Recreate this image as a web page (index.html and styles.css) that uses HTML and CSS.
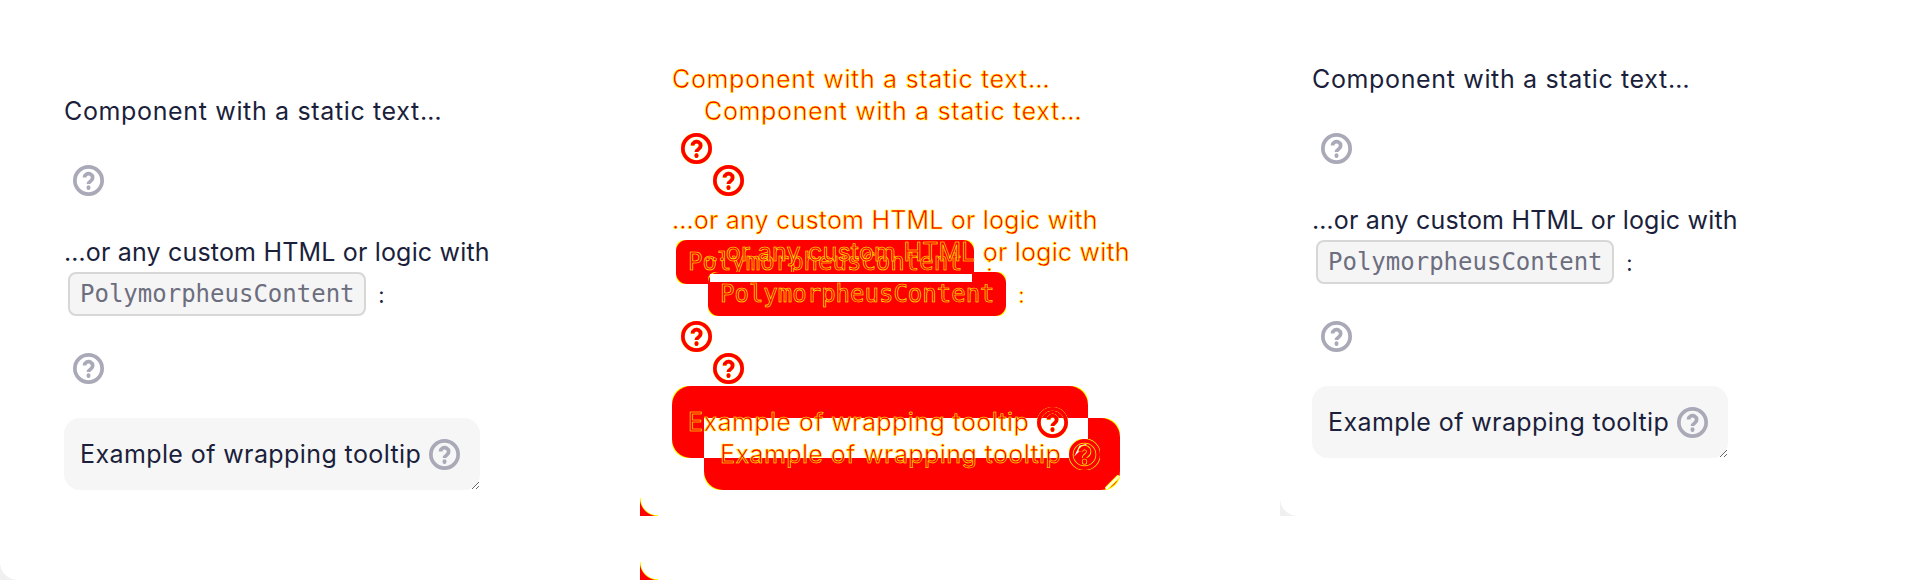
FILE: index.html
```html
<!DOCTYPE html>
<html lang="en">
<head>
    <meta charset="UTF-8" />
    <meta name="viewport" content="width=device-width, initial-scale=1.0" />
    <title>Tooltip screenshot diff</title>
    <link rel="stylesheet" href="styles.css">
</head>
<body>

    <div class="compare">

        <!-- baseline -->
        <div class="shot shot-full">
            <div class="content content-wide">
                <p class="line line-static">Component with a static text…</p>
                <div class="hint hint-first">
                    <svg class="icon" viewBox="0 0 30 30"><circle cx="15" cy="15" r="13.2"/><path d="M11.2 12.2a3.9 3.9 0 1 1 6 3.3c-1.4.9-2.2 1.6-2.2 3"/><path class="dot" d="M15 21.6v.6"/></svg>
                </div>
                <p class="line line-custom">…or any custom HTML or logic with <span class="chip"><code class="chip-text">PolymorpheusContent</code></span> <span class="colon">:</span></p>
                <div class="hint hint-second">
                    <svg class="icon" viewBox="0 0 30 30"><circle cx="15" cy="15" r="13.2"/><path d="M11.2 12.2a3.9 3.9 0 1 1 6 3.3c-1.4.9-2.2 1.6-2.2 3"/><path class="dot" d="M15 21.6v.6"/></svg>
                </div>
                <div class="wrap-box">
                    <span class="wrap-text">Example of wrapping tooltip</span>
                    <svg class="icon" viewBox="0 0 30 30"><circle cx="15" cy="15" r="13.2"/><path d="M11.2 12.2a3.9 3.9 0 1 1 6 3.3c-1.4.9-2.2 1.6-2.2 3"/><path class="dot" d="M15 21.6v.6"/></svg>
                </div>
            </div>
        </div>

        <!-- diff: both versions stacked in one grid cell -->
        <div class="diff">
            <div class="layer layer-short">
                <div class="content content-narrow">
                    <p class="line line-static">Component with a static text…</p>
                    <div class="hint hint-first">
                        <svg class="icon" viewBox="0 0 30 30"><circle cx="15" cy="15" r="13.2"/><path d="M11.2 12.2a3.9 3.9 0 1 1 6 3.3c-1.4.9-2.2 1.6-2.2 3"/><path class="dot" d="M15 21.6v.6"/></svg>
                    </div>
                    <p class="line line-custom">…or any custom HTML or logic with <span class="chip"><code class="chip-text">PolymorpheusContent</code></span> <span class="colon">:</span></p>
                    <div class="hint hint-second">
                        <svg class="icon" viewBox="0 0 30 30"><circle cx="15" cy="15" r="13.2"/><path d="M11.2 12.2a3.9 3.9 0 1 1 6 3.3c-1.4.9-2.2 1.6-2.2 3"/><path class="dot" d="M15 21.6v.6"/></svg>
                    </div>
                    <div class="wrap-box">
                        <span class="wrap-text">Example of wrapping tooltip</span>
                        <svg class="icon" viewBox="0 0 30 30"><circle cx="15" cy="15" r="13.2"/><path d="M11.2 12.2a3.9 3.9 0 1 1 6 3.3c-1.4.9-2.2 1.6-2.2 3"/><path class="dot" d="M15 21.6v.6"/></svg>
                    </div>
                </div>
            </div>
            <div class="layer layer-full">
                <div class="content content-wide">
                    <p class="line line-static">Component with a static text…</p>
                    <div class="hint hint-first">
                        <svg class="icon" viewBox="0 0 30 30"><circle cx="15" cy="15" r="13.2"/><path d="M11.2 12.2a3.9 3.9 0 1 1 6 3.3c-1.4.9-2.2 1.6-2.2 3"/><path class="dot" d="M15 21.6v.6"/></svg>
                    </div>
                    <p class="line line-custom">…or any custom HTML or logic with <span class="chip"><code class="chip-text">PolymorpheusContent</code></span> <span class="colon">:</span></p>
                    <div class="hint hint-second">
                        <svg class="icon" viewBox="0 0 30 30"><circle cx="15" cy="15" r="13.2"/><path d="M11.2 12.2a3.9 3.9 0 1 1 6 3.3c-1.4.9-2.2 1.6-2.2 3"/><path class="dot" d="M15 21.6v.6"/></svg>
                    </div>
                    <div class="wrap-box">
                        <span class="wrap-text">Example of wrapping tooltip</span>
                        <svg class="icon icon-filled" viewBox="0 0 30 30">
                            <circle class="edge" cx="15" cy="15" r="13.2"/>
                            <circle cx="15" cy="15" r="13.2"/>
                            <path class="wedge" d="M5 17L17.5 4.5 10 6.5z"/>
                            <path class="edge" d="M11.2 12.2a3.9 3.9 0 1 1 6 3.3c-1.4.9-2.2 1.6-2.2 3"/>
                            <path d="M11.2 12.2a3.9 3.9 0 1 1 6 3.3c-1.4.9-2.2 1.6-2.2 3"/>
                            <path class="edge dot" d="M15 21.6v.6"/>
                            <path class="dot" d="M15 21.6v.6"/>
                        </svg>
                        <svg class="grip" viewBox="0 0 15 15"><path class="grip-edge" d="M1 14L14 1"/><path d="M1 14L14 1"/></svg>
                    </div>
                </div>
            </div>
        </div>

        <!-- current -->
        <div class="shot shot-short">
            <div class="content content-narrow">
                <p class="line line-static">Component with a static text…</p>
                <div class="hint hint-first">
                    <svg class="icon" viewBox="0 0 30 30"><circle cx="15" cy="15" r="13.2"/><path d="M11.2 12.2a3.9 3.9 0 1 1 6 3.3c-1.4.9-2.2 1.6-2.2 3"/><path class="dot" d="M15 21.6v.6"/></svg>
                </div>
                <p class="line line-custom">…or any custom HTML or logic with <span class="chip"><code class="chip-text">PolymorpheusContent</code></span> <span class="colon">:</span></p>
                <div class="hint hint-second">
                    <svg class="icon" viewBox="0 0 30 30"><circle cx="15" cy="15" r="13.2"/><path d="M11.2 12.2a3.9 3.9 0 1 1 6 3.3c-1.4.9-2.2 1.6-2.2 3"/><path class="dot" d="M15 21.6v.6"/></svg>
                </div>
                <div class="wrap-box">
                    <span class="wrap-text">Example of wrapping tooltip</span>
                    <svg class="icon" viewBox="0 0 30 30"><circle cx="15" cy="15" r="13.2"/><path d="M11.2 12.2a3.9 3.9 0 1 1 6 3.3c-1.4.9-2.2 1.6-2.2 3"/><path class="dot" d="M15 21.6v.6"/></svg>
                </div>
            </div>
        </div>

    </div>

</body>
</html>
```

FILE: styles.css
```css
html, body {
    margin: 0;
    height: 100%;
    background: #fff;
}
body {
    overflow: hidden;
    font-family: Inter, "Noto Sans", sans-serif;
    font-size: 25px;
    color: #1b1f3b;
}
.compare {
    display: flex;
    width: 1920px;
    height: 580px;
}
.shot, .layer {
    position: relative;
    width: 640px;
}
.shot-full, .layer-full {
    height: 580px;
}
.shot-short, .layer-short {
    height: 516px;
}
.shot::after {
    content: "";
    position: absolute;
    left: 0;
    bottom: 0;
    width: 18px;
    height: 18px;
    background: radial-gradient(circle at 18px 0, transparent 17.5px, #f0f0f0 18.5px);
}

.content {
    width: 576px;
}
.content-wide {
    padding: 89px 0 0 64px;
}
.content-narrow {
    padding: 57px 0 0 32px;
}
.line {
    margin: 0;
    line-height: 44px;
}
.line-static {
    letter-spacing: .65px;
}
.line-custom {
    letter-spacing: .18px;
}
.wrap-text {
    letter-spacing: .4px;
}
.hint {
    height: 31px;
    padding-left: 9px;
}
.hint-first {
    margin: 32px 0 34px;
}
.hint-second {
    margin: 35px 0 34px;
}
.icon {
    display: block;
    flex: none;
    width: 31px;
    height: 31px;
    fill: none;
    stroke: #a9a9b8;
    stroke-width: 3.6;
}
.icon .dot {
    stroke-linecap: round;
    stroke-width: 3.8;
}

.chip {
    display: inline-block;
    box-sizing: border-box;
    width: 298px;
    height: 44px;
    margin: -2px 4px 0;
    padding: 0 10px;
    border: 2px solid #d7d7d7;
    border-radius: 8px;
    background: #f5f5f6;
    vertical-align: top;
    line-height: 38px;
    letter-spacing: 0;
}
.chip-text {
    font-family: "DejaVu Sans Mono", monospace;
    font-size: 24px;
    color: #6c6e7e;
}
.colon {
    margin-left: 1px;
    font-size: 22px;
    line-height: 1;
    vertical-align: 2px;
}

.wrap-box {
    display: flex;
    align-items: center;
    gap: 8px;
    box-sizing: border-box;
    width: 416px;
    height: 72px;
    padding: 0 16px;
    border-radius: 16px;
    background: #f6f6f6;
    overflow: hidden;
    resize: both;
}

/* diff panel: red where the versions differ, yellow on antialiased edges */
.diff {
    display: grid;
    width: 640px;
    height: 580px;
}
.layer {
    grid-area: 1 / 1;
}
.layer::after {
    content: "";
    position: absolute;
    left: 0;
    bottom: 0;
    width: 18px;
    height: 18px;
    background: radial-gradient(circle at 18px 0, transparent 17px, #ff0 17.6px, #f00 18.6px);
}
.diff .line,
.diff .wrap-text,
.diff .chip-text,
.diff .colon {
    position: relative;
    z-index: 1;
    color: #f00;
    -webkit-text-stroke: .6px #ff0;
}
.diff .icon {
    position: relative;
    z-index: 1;
    stroke: #f00;
    filter: drop-shadow(0 0 .6px #ff0) drop-shadow(0 0 .6px #ff0);
}
.diff .icon-filled {
    filter: none;
}
.diff .icon-filled .edge {
    fill: #f00;
    stroke: #ff0;
    stroke-width: 5;
}
.diff .icon-filled path.edge {
    fill: none;
}
.diff .icon-filled .wedge {
    fill: #fff;
    stroke: none;
}
.diff .chip,
.diff .wrap-box {
    position: relative;
    border-color: transparent;
    background: #ff0;
    overflow: visible;
    resize: none;
}
.diff .chip::before,
.diff .wrap-box::before {
    content: "";
    position: absolute;
    inset: -2px;
    border-radius: 11px;
    background: #f00;
}
.diff .wrap-box::before {
    inset: 0;
    border-radius: 19px;
}

/* where the two boxes overlap they are equal, so nothing is marked */
.layer-full .chip::after,
.layer-full .wrap-box::after {
    content: "";
    position: absolute;
    left: 0;
    top: 0;
    width: 262px;
    height: 8px;
    background: #fff;
}
.layer-full .wrap-box::after {
    width: 384px;
    height: 40px;
}
.grip {
    position: absolute;
    z-index: 1;
    right: 0;
    bottom: 0;
    width: 15px;
    height: 15px;
    fill: none;
    stroke: #fff;
    stroke-width: 2;
}
.grip .grip-edge {
    stroke: #ff0;
    stroke-width: 4;
}
```
